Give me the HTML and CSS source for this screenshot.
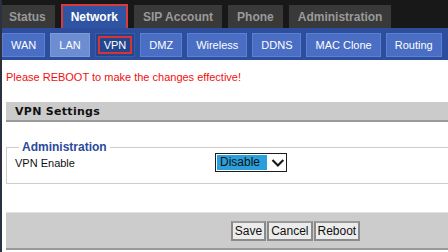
FILE: index.html
```html
<!DOCTYPE html>
<html lang="en">
<head>
  <meta charset="UTF-8">
  <title>Network - VPN</title>
  <link rel="stylesheet" href="styles.css">
</head>
<body>
  <!-- Main tabs -->
  <div class="topbar">
    <a class="tab">Status</a>
    <a class="tab active">Network</a>
    <a class="tab">SIP Account</a>
    <a class="tab">Phone</a>
    <a class="tab">Administration</a>
  </div>

  <!-- Network sub tabs -->
  <div class="subbar">
    <a class="subtab">WAN</a>
    <a class="subtab light">LAN</a>
    <a class="subtab current">VPN</a>
    <a class="subtab">DMZ</a>
    <a class="subtab">Wireless</a>
    <a class="subtab">DDNS</a>
    <a class="subtab">MAC Clone</a>
    <a class="subtab">Routing</a>
  </div>

  <div class="content">
    <p class="notice">Please REBOOT to make the changes effective!</p>

    <div class="section-title">VPN Settings</div>

    <fieldset class="group">
      <legend>Administration</legend>
      <div class="row">
        <span class="label">VPN Enable</span>
        <div class="select">
          <span class="select-value">Disable</span>
          <svg class="select-arrow" width="14" height="10" viewBox="0 0 14 10">
            <polyline points="1.5,2 7,7.5 12.5,2" fill="none" stroke="#1a1a1a" stroke-width="2.2"/>
          </svg>
        </div>
      </div>
    </fieldset>

    <div class="actions">
      <button class="btn">Save</button>
      <button class="btn">Cancel</button>
      <button class="btn">Reboot</button>
    </div>
  </div>
</body>
</html>
```

FILE: styles.css
```css
html {
  overflow: hidden;
}
body {
  margin: 0;
  background: #fff;
  font-family: "Liberation Sans", Arial, sans-serif;
  font-size: 11px;
  color: #111;
  border-left: 2px solid #2c3140;
  min-height: 252px;
}
.topbar {
  display: flex;
  gap: 6px;
  height: 24px;
  padding-top: 4px;
  background: #181818;
  margin-left: -2px;
}
.tab {
  display: flex;
  align-items: center;
  flex-shrink: 0;
  white-space: nowrap;
  padding: 0 9px;
  margin-top: 1px;
  background: #393939;
  color: #9a9a9a;
  font-weight: bold;
  font-size: 12px;
}
.tab.active {
  margin-top: 0;
  padding: 0 8px;
  background: #2f54a4;
  color: #fff;
  border: 2px solid #d93a3a;
  border-bottom: none;
}
.subbar {
  display: flex;
  gap: 5px;
  height: 32px;
  padding: 5px 0 0 0;
  box-sizing: border-box;
  background: #2c4e9c;
}
.subtab {
  display: flex;
  align-items: center;
  flex-shrink: 0;
  white-space: nowrap;
  height: 24px;
  box-sizing: border-box;
  padding: 0 8px;
  background: #4a6ec4;
  border: 1px solid #5c80d2;
  color: #fff;
  font-size: 11px;
}
.subtab.light {
  background: #6d8dd2;
  border-color: #7c9ad8;
}
.subtab.current {
  background: #24468e;
  border-color: #3a5ca8;
  outline: 2px solid #d83434;
  outline-offset: -5px;
}
.content {
  width: 580px;
  padding-left: 4px;
}
.notice {
  margin: 10px 0 0;
  line-height: 14px;
  color: #f01010;
  font-size: 11px;
}
.section-title {
  margin-top: 18px;
  height: 18px;
  line-height: 19px;
  padding-left: 9px;
  background: #cbcbcb;
  border-bottom: 2px solid #9a9a9a;
  font-family: "DejaVu Sans", Verdana, sans-serif;
  font-weight: bold;
  font-size: 11px;
  letter-spacing: 0.3px;
  color: #111;
}
.group {
  margin: 19px 0 0;
  padding: 0 8px 11px;
  border: 1px solid #cdcdcd;
}
.group legend {
  margin-left: 4px;
  padding: 0 3px;
  line-height: 12px;
  color: #2b4a9c;
  font-weight: bold;
  font-size: 12px;
}
.row {
  display: flex;
  align-items: center;
  height: 19px;
}
.label {
  width: 200px;
}
.select {
  display: flex;
  align-items: center;
  width: 72px;
  height: 19px;
  box-sizing: border-box;
  border: 1px solid #1c1c1c;
  padding: 1px;
  background: #fff;
}
.select-value {
  width: 48px;
  height: 15px;
  line-height: 15px;
  padding-left: 3px;
  background: #29a0dc;
  color: #111;
  font-size: 12px;
}
.select-arrow {
  margin-left: 4px;
}
.actions {
  display: flex;
  justify-content: center;
  margin-top: 28px;
  padding: 8px 0 7px 0;
  background: #cccccc;
  border-top: 1px solid #e2e2e2;
  border-bottom: 2px solid #999;
}
.btn {
  height: 20px;
  margin: 0 1px 0 0;
  padding: 0 2px;
  background: #ececec;
  border: 2px solid #8a8a8a;
  border-top-color: #9a9a9a;
  font-family: "Liberation Sans", Arial, sans-serif;
  font-size: 12px;
  color: #111;
}
```
